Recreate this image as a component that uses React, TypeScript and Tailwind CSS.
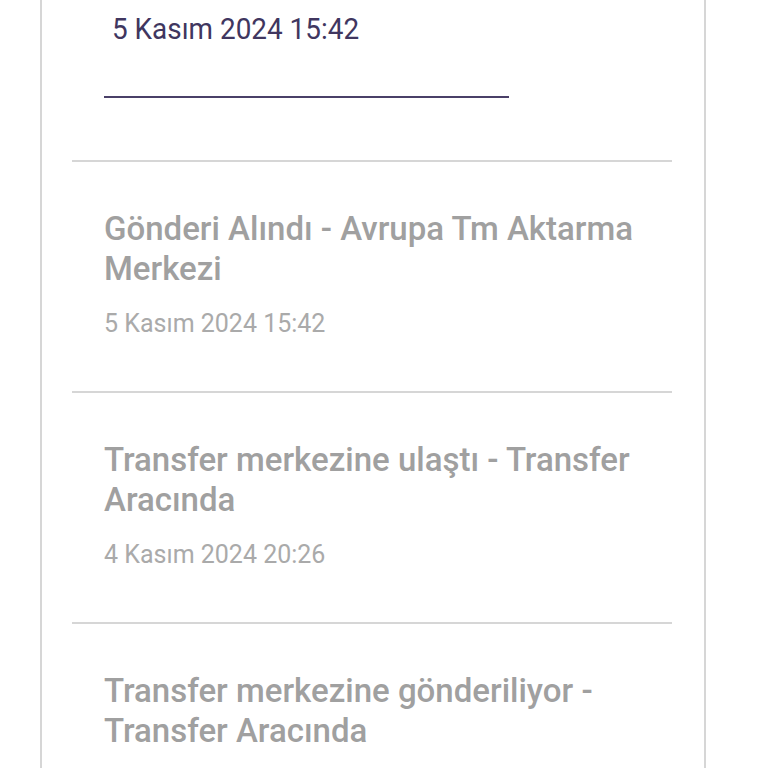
import * as React from 'react';

type Step = {
  title: string;
  date: string;
};

const steps: Step[] = [
  { title: 'Gönderi Alındı - Avrupa Tm Aktarma Merkezi', date: '5 Kasım 2024 15:42' },
  { title: 'Transfer merkezine ulaştı - Transfer Aracında', date: '4 Kasım 2024 20:26' },
  { title: 'Transfer merkezine gönderiliyor - Transfer Aracında', date: '4 Kasım 2024 18:10' },
];

const StepRow = ({ step }: { step: Step }) => (
  <div className="border-t-2 border-[#d6d6d6] pt-[47px] pb-[51px] pl-[32px] pr-[20px]">
    <h3 className="text-[33px] leading-[40px] font-medium text-[#a0a0a0]">{step.title}</h3>
    <p className="mt-[19px] text-[25px] leading-[32px] text-[#aaaaaa]">{step.date}</p>
  </div>
);

const App = () => {
  return (
    <div className="h-[768px] bg-white pl-[40px] overflow-hidden" style={{ fontFamily: 'Roboto, "Noto Sans", sans-serif' }}>
      <div className="w-[666px] min-h-[768px] border-x-2 border-[#d6d6d6] pl-[30px] pr-[32px]">
        <div className="pl-[32px] pt-[11px] pb-[62px]">
          <div className="pl-[8px]">
            <span className="inline-block origin-left scale-x-[0.93] text-[30px] leading-[36px] text-[#40365f]">
              5 Kasım 2024 15:42
            </span>
          </div>
          <div className="mt-[49px] h-[2px] w-[405px] bg-[#4a4068]" />
        </div>
        {steps.map((s, i) => (
          <StepRow key={i} step={s} />
        ))}
      </div>
    </div>
  );
};

export default App;
